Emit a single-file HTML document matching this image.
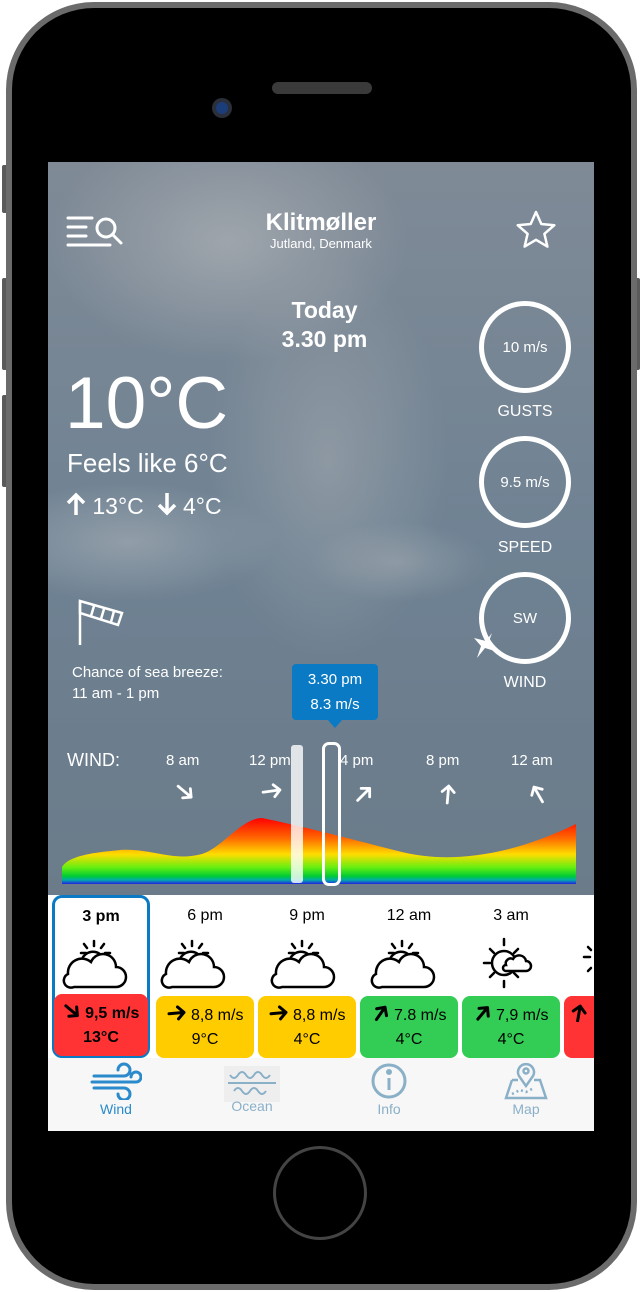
<!DOCTYPE html>
<html><head><meta charset="utf-8"><style>
*{margin:0;padding:0;box-sizing:border-box}
body{width:642px;height:1292px;background:#fff;position:relative;overflow:hidden;font-family:"Liberation Sans",sans-serif}
.phone{position:absolute;left:6px;top:2px;width:631px;height:1288px;border-radius:88px;background:#6b6b6b}
.phone2{position:absolute;left:12px;top:8px;width:619px;height:1276px;border-radius:82px;background:#000}
.btn{position:absolute;background:#5a5a5a;width:6px;border-radius:2px}
.screen{position:absolute;left:48px;top:162px;width:546px;height:969px;overflow:hidden;background:linear-gradient(180deg,#7f8a96 0%,#6f8293 40%,#6b7c8b 70%,#6a7785 100%)}
.a{position:absolute;color:#fff;white-space:nowrap}
.ring{position:absolute;width:92px;height:92px;border:5px solid #fff;border-radius:50%;color:#fff;font-size:15px;display:flex;align-items:center;justify-content:center}
.card{position:absolute;top:733px;width:98px;height:163px;text-align:center}
.box{position:absolute;left:0;right:0;bottom:0;height:62px;border-radius:8px;color:#000;font-size:16px}
.tab{position:absolute;top:896px;height:73px;width:136px;text-align:center;font-size:14px;color:#8ab0c8}
.ar{display:inline-block;vertical-align:-2px}
</style></head><body>
<div class="btn" style="left:2px;top:165px;height:48px"></div>
<div class="btn" style="left:2px;top:278px;height:92px"></div>
<div class="btn" style="left:2px;top:395px;height:92px"></div>
<div class="btn" style="left:634px;top:278px;height:92px"></div>
<div class="phone"></div>
<div class="phone2"></div>
<div style="position:absolute;left:212px;top:98px;width:20px;height:20px;border-radius:50%;background:#2a2f3a"></div>
<div style="position:absolute;left:216px;top:102px;width:12px;height:12px;border-radius:50%;background:#1b3d7a"></div>
<div style="position:absolute;left:272px;top:82px;width:100px;height:12px;border-radius:6px;background:#3a3a3a"></div>
<div style="position:absolute;left:273px;top:1146px;width:94px;height:94px;border-radius:50%;border:3px solid #444;background:#000"></div>

<div class="screen">
<div style="position:absolute;left:0;top:0;width:546px;height:733px;background:radial-gradient(ellipse 180px 120px at 180px 80px,rgba(200,200,200,.45),transparent),radial-gradient(ellipse 120px 200px at 280px 300px,rgba(190,190,190,.35),transparent),radial-gradient(ellipse 150px 60px at 80px 380px,rgba(210,210,210,.35),transparent),radial-gradient(ellipse 90px 40px at 350px 400px,rgba(200,200,200,.3),transparent)"></div>
<svg class="a" style="left:18px;top:52px" width="58" height="34" viewBox="0 0 58 34" fill="none" stroke="#fff" stroke-width="3" stroke-linecap="round"><path d="M2 4h24M2 13h18M2 22h18M2 31h42"/><circle cx="40" cy="14" r="9"/><path d="M47 21l8 8"/></svg>
<div class="a" style="left:0;width:546px;text-align:center;top:47px;font-size:24px;font-weight:bold">Klitmøller</div>
<div class="a" style="left:0;width:546px;text-align:center;top:74px;font-size:13px">Jutland, Denmark</div>
<svg class="a" style="left:466px;top:46px" width="44" height="44" viewBox="0 0 44 44"><path d="M22 4l5.3 12 13 1.2-9.9 8.6 3 12.8L22 31.8 10.6 38.6l3-12.8-9.9-8.6 13-1.2z" fill="none" stroke="#fff" stroke-width="2.5" stroke-linejoin="round"/></svg>
<div class="a" style="left:0;width:553px;text-align:center;top:134px;font-size:23px;font-weight:bold;line-height:29px">Today<br>3.30 pm</div>
<div class="a" style="left:17px;top:200px;font-size:73px;line-height:84px">10°C</div>
<div class="a" style="left:19px;top:286px;font-size:26px">Feels like 6°C</div>
<div class="a" style="left:18px;top:330px;font-size:23px"><svg class="ar" width="20" height="24" viewBox="0 0 20 24" fill="none" stroke="#fff" stroke-width="3.5"><path d="M10 23V3M2 11l8-8 8 8"/></svg> 13°C &nbsp;<svg class="ar" width="20" height="24" viewBox="0 0 20 24" fill="none" stroke="#fff" stroke-width="3.5"><path d="M10 1v20M2 13l8 8 8-8"/></svg> 4°C</div>
<div class="ring" style="left:431px;top:139px">10 m/s</div>
<div class="a" style="left:431px;width:92px;text-align:center;top:241px;font-size:16px">GUSTS</div>
<div class="ring" style="left:431px;top:274px">9.5 m/s</div>
<div class="a" style="left:431px;width:92px;text-align:center;top:377px;font-size:16px">SPEED</div>
<div class="ring" style="left:431px;top:410px">SW</div>
<svg class="a" style="left:424px;top:468px" width="30" height="30" viewBox="0 0 30 30"><path d="M20 3L16 14 26 22 13 18 5 28 9 16 2 8 14 11z" fill="#fff"/></svg>
<div class="a" style="left:431px;width:92px;text-align:center;top:512px;font-size:16px">WIND</div>
<svg class="a" style="left:28px;top:437px" width="52" height="48" viewBox="0 0 52 48" fill="none" stroke="#fff" stroke-width="2.5"><path d="M4 2v44"/><path d="M4 2l42 12-4 12L4 14z"/><path d="M18 7l-3 10M28 10l-3 10M38 12l-3 11"/></svg>
<div class="a" style="left:24px;top:500px;font-size:15px;line-height:21px">Chance of sea breeze:<br>11 am - 1 pm</div>
<div class="a" style="left:244px;top:502px;width:86px;height:56px;background:#0a7ac5;border-radius:4px;text-align:center;font-size:15px;line-height:25px;padding-top:3px">3.30 pm<br>8.3 m/s</div>
<div class="a" style="left:279px;top:557px;width:0;height:0;border-left:8px solid transparent;border-right:8px solid transparent;border-top:9px solid #0a7ac5"></div>
<div class="a" style="left:19px;top:588px;font-size:18px">WIND:</div>
<div class="a" style="left:118px;top:590px;font-size:15px">8 am</div>
<div class="a" style="left:201px;top:590px;font-size:15px">12 pm</div>
<div class="a" style="left:292px;top:590px;font-size:15px">4 pm</div>
<div class="a" style="left:378px;top:590px;font-size:15px">8 pm</div>
<div class="a" style="left:463px;top:590px;font-size:15px">12 am</div>
<svg class="a" style="left:0;top:612px" width="546" height="36" viewBox="0 0 546 36" fill="none" stroke="#fff" stroke-width="2.8" stroke-linecap="round" stroke-linejoin="round">
<g transform="translate(137 18) rotate(40)"><path d="M-9 0h17M2-6l6 6-6 6"/></g>
<g transform="translate(224 17) rotate(-8)"><path d="M-9 0h17M2-6l6 6-6 6"/></g>
<g transform="translate(316 20) rotate(-45)"><path d="M-9 0h17M2-6l6 6-6 6"/></g>
<g transform="translate(400 20) rotate(-85)"><path d="M-9 0h17M2-6l6 6-6 6"/></g>
<g transform="translate(490 20) rotate(-120)"><path d="M-9 0h17M2-6l6 6-6 6"/></g>
</svg>
<svg class="a" style="left:14px;top:650px" width="514" height="72" viewBox="0 0 514 72">
<defs><linearGradient id="g" x1="0" y1="0" x2="0" y2="1"><stop offset="0" stop-color="#f00"/><stop offset=".3" stop-color="#f60"/><stop offset=".55" stop-color="#fd0"/><stop offset=".75" stop-color="#6e1"/><stop offset=".88" stop-color="#0c3"/><stop offset=".94" stop-color="#0aa"/><stop offset="1" stop-color="#22d"/></linearGradient></defs>
<path d="M0 72V55C8 42 40 40 58 38 90 36 110 50 140 42 160 36 180 6 200 6 240 14 300 30 340 40 380 50 440 48 514 12V72z" fill="url(#g)"/></svg>
<div class="a" style="left:243px;top:583px;width:12px;height:138px;background:rgba(255,255,255,.8);border-radius:3px"></div>
<div class="a" style="left:274px;top:580px;width:19px;height:144px;border:3px solid #fff;border-radius:7px"></div>

<div style="position:absolute;left:0;top:733px;width:546px;height:163px;background:#fff"></div>
<svg width="0" height="0" style="position:absolute"><defs><g id="arr"><path d="M-8 0h15M1-6l6 6-6 6" fill="none" stroke="#000" stroke-width="3" stroke-linecap="round" stroke-linejoin="round"/></g></defs></svg>
<div class="card" style="left:4px;border:3px solid #0a7ac5;border-radius:10px;"><div style="font-size:16px;font-weight:bold;margin-top:10px">3 pm</div><div class="box" style="background:#f33;bottom:-1px;left:-1px;right:-1px;font-weight:bold"><div style="margin-top:8px"><svg class="ar" width="18" height="18" viewBox="-9 -9 18 18"><use href="#arr" transform="rotate(40)"/></svg> 9,5 m/s</div><div style="margin-top:6px">13°C</div></div></div>
<div class="card" style="left:108px"><div style="font-size:16px;margin-top:12px">6 pm</div><div class="box" style="background:#fc0"><div style="margin-top:8px"><svg class="ar" width="20" height="18" viewBox="-9 -9 18 18"><use href="#arr" transform="rotate(-5)"/></svg> 8,8 m/s</div><div style="margin-top:6px">9°C</div></div></div>
<div class="card" style="left:210px"><div style="font-size:16px;margin-top:12px">9 pm</div><div class="box" style="background:#fc0"><div style="margin-top:8px"><svg class="ar" width="20" height="18" viewBox="-9 -9 18 18"><use href="#arr" transform="rotate(-5)"/></svg> 8,8 m/s</div><div style="margin-top:6px">4°C</div></div></div>
<div class="card" style="left:312px"><div style="font-size:16px;margin-top:12px">12 am</div><div class="box" style="background:#3c5"><div style="margin-top:8px"><svg class="ar" width="18" height="18" viewBox="-9 -9 18 18"><use href="#arr" transform="rotate(-55)"/></svg> 7.8 m/s</div><div style="margin-top:6px">4°C</div></div></div>
<div class="card" style="left:414px"><div style="font-size:16px;margin-top:12px">3 am</div><div class="box" style="background:#3c5"><div style="margin-top:8px"><svg class="ar" width="18" height="18" viewBox="-9 -9 18 18"><use href="#arr" transform="rotate(-50)"/></svg> 7,9 m/s</div><div style="margin-top:6px">4°C</div></div></div>
<div class="card" style="left:516px;width:40px"><div class="box" style="background:#f33;text-align:left;padding-left:6px"><div style="margin-top:8px"><svg class="ar" width="18" height="18" viewBox="-9 -9 18 18"><use href="#arr" transform="rotate(-80)"/></svg></div></div></div>
<svg class="a" style="left:0;top:775px" width="546" height="60" viewBox="0 0 546 60" fill="none" stroke="#000" stroke-width="2.5" stroke-linecap="round">
<g id="c"><path d="M46 4v5M56 7l-3 4M62 16h-5M36 7l3 4M33 16h5"/><path d="M34 22a12 12 0 0 1 22 0"/><path d="M26 50H68a10 10 0 0 0 0-20 13 13 0 0 0-25-5 14 14 0 0 0-23 12 7 7 0 0 0 6 13z" fill="#fff"/></g>
<use href="#c" x="98"/><use href="#c" x="208"/><use href="#c" x="308"/>
<g transform="translate(406 0)"><path d="M50 2v6M50 44v6M30 26h6M64 26h6M36 12l4 4M64 12l-4 4M36 40l4-4M64 40l-4-4"/><circle cx="50" cy="26" r="12"/><path d="M52 34h20a5 5 0 0 0 0-10 7 7 0 0 0-13-2 5 5 0 0 0-7 6 3 3 0 0 0 0 6z" fill="#fff"/></g>
<path d="M536 20h6M540 10l3 3M540 34l3-3"/>
</svg>
<div style="position:absolute;left:0;top:896px;width:546px;height:73px;background:#f7f7f7"></div>
<div class="tab" style="left:0;color:#2a8acb"><svg style="margin-top:4px" width="52" height="38" viewBox="0 0 52 38" fill="none" stroke="#2a8acb" stroke-width="3" stroke-linecap="round"><path d="M4 14h30a6 6 0 1 0-6-6M2 20h44a5 5 0 1 0-5-5M4 26h30a6 6 0 1 1-6 6"/></svg><div style="margin-top:-2px">Wind</div></div>
<div class="tab" style="left:136px"><div style="width:56px;height:36px;margin:8px auto 0;background:#eee"><svg width="52" height="30" viewBox="0 0 52 30" fill="none" stroke="#8ab0c8" stroke-width="2" style="margin-top:3px"><path d="M4 6q4 6 8 0t8 0 8 0 8 0 8 0M2 14h48M8 22q4-6 8 0t8 0 8 0 8 0"/></svg></div><div style="margin-top:-4px">Ocean</div></div>
<div class="tab" style="left:273px"><svg style="margin-top:4px" width="40" height="38" viewBox="0 0 40 38" fill="none" stroke="#8ab0c8" stroke-width="3"><circle cx="20" cy="19" r="16"/><path d="M20 16v12"/><circle cx="20" cy="10" r="1.5" fill="#8ab0c8"/></svg><div style="margin-top:-2px">Info</div></div>
<div class="tab" style="left:410px"><svg style="margin-top:4px" width="44" height="38" viewBox="0 0 44 38" fill="none" stroke="#8ab0c8" stroke-width="2.5"><path d="M8 18L2 36h40l-6-18h-6M14 18h-6"/><path d="M22 24l-7-10a8 8 0 1 1 14 0z"/><circle cx="22" cy="9" r="2.5"/><path d="M8 32l8-4 6 2 8-4" stroke-dasharray="2 3"/></svg><div style="margin-top:-2px">Map</div></div>
</div>
</body></html>
